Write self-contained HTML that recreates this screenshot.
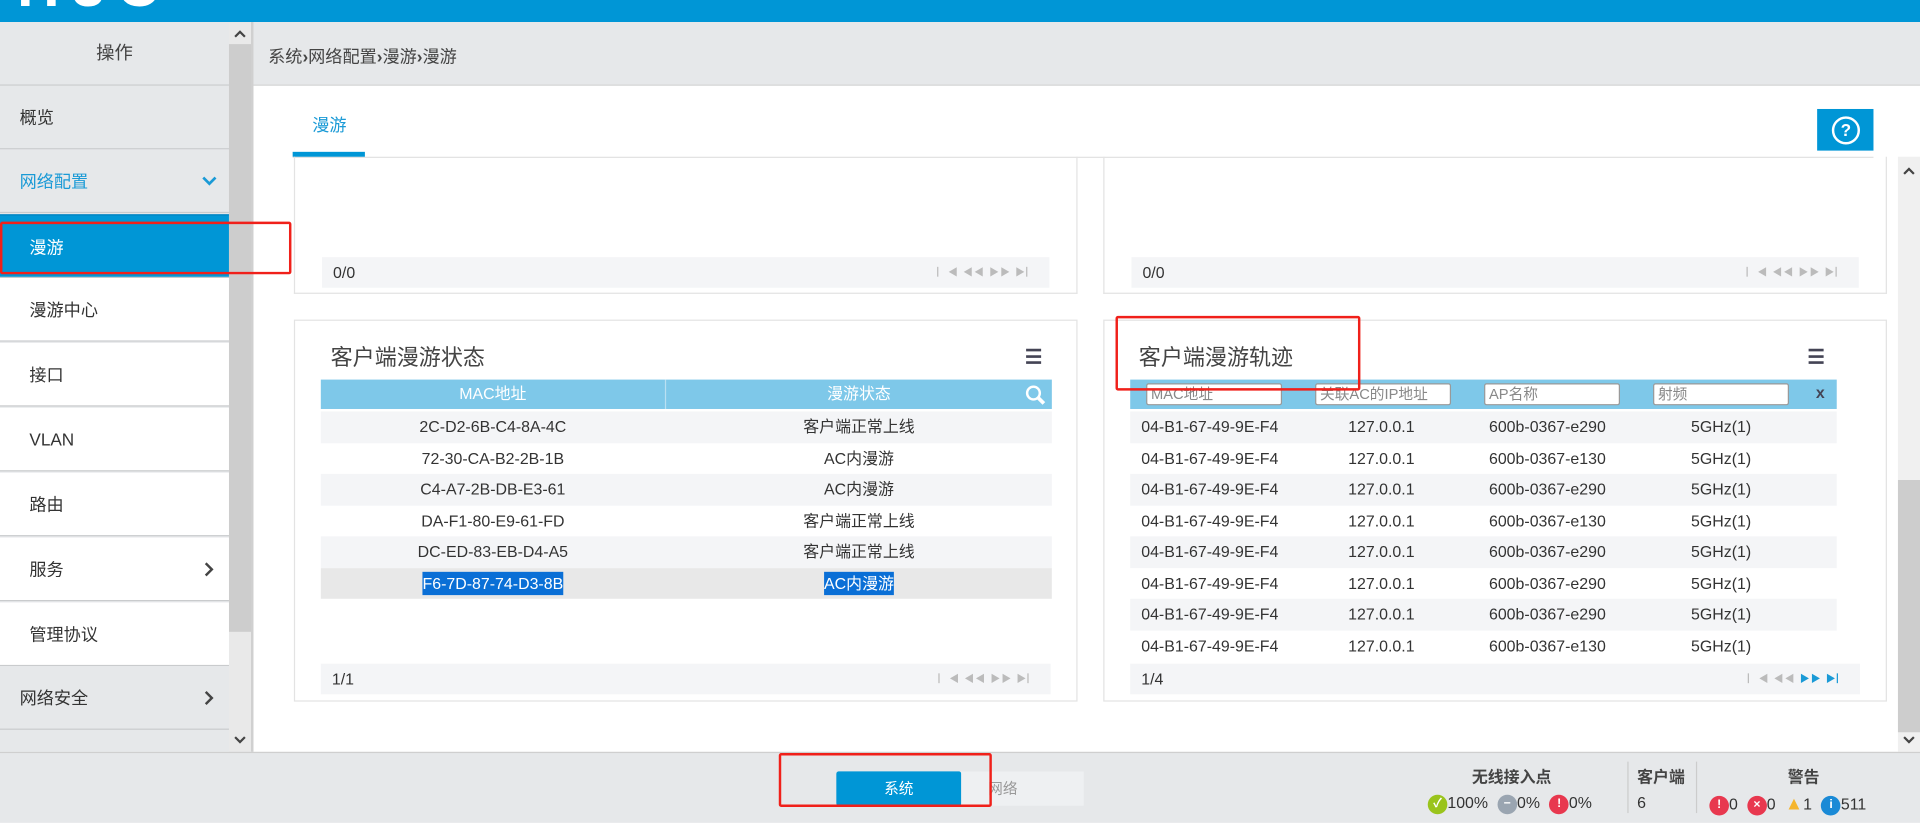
<!DOCTYPE html>
<html><head><meta charset="utf-8"><style>
html,body{margin:0;padding:0;width:1920px;height:821px;overflow:hidden;background:#fff}
#w{position:absolute;left:0;top:0;width:1568px;height:671px;transform:scale(1.22449);transform-origin:0 0;font-family:"Liberation Sans","Noto Sans CJK SC",sans-serif;color:#333;font-size:13px}
.a{position:absolute}
.nav{position:absolute;left:0;width:187px;height:52px;border-bottom:1px solid #c9cbcd;background:#e6e8ea;font-size:14px;line-height:52px;box-sizing:border-box}
.rows div{position:absolute;left:0;right:0;height:25.5px;line-height:25.5px}
.g{background:#f4f5f7}
.c{position:absolute;text-align:center}
.ft{position:absolute;left:22px;right:22px;height:25px;background:#f4f5f7;line-height:25px;padding-left:9px;font-size:13px}
.pg{position:absolute;right:10px;top:0;color:#bbb;font-size:8px;letter-spacing:1px}
.inp{position:absolute;top:3px;height:18px;background:#fff;border:1px solid #999;border-radius:2px;box-sizing:border-box;color:#888;font-size:12px;line-height:16px;padding-left:3px}
.red{position:absolute;border:2px solid #f0201a;border-radius:2px}
.ic{display:inline-block;width:16px;height:16px;border-radius:50%;color:#fff;font-size:10px;line-height:16px;text-align:center;font-weight:bold;vertical-align:middle;margin-left:4px}
</style></head><body><div id="w">
<div class="a" style="left:0;top:0;width:1568px;height:18px;background:#0096d6;overflow:hidden"><div class="a" style="left:14px;top:-38px;color:#fff;font-size:48px;font-weight:bold;letter-spacing:10px">H3C</div></div>
<!-- sidebar -->
<div class="a" style="left:0;top:18px;width:207px;height:596px;background:#e6e8ea"></div>
<div class="nav" style="top:18px;text-align:center;font-size:15px;color:#444">操作</div>
<div class="nav" style="top:70px;padding-left:16px">概览</div>
<div class="nav" style="top:122px;padding-left:16px;color:#1a9ad6">网络配置<svg class="a" style="left:165px;top:22px" width="12" height="8" viewBox="0 0 12 8"><path d="M1 1l5 5 5-5" stroke="#1a9ad6" stroke-width="2.2" fill="none"/></svg></div>
<div class="nav" style="top:175px;height:52px;background:#0096d6;color:#fff;padding-left:24px;border-top:1px solid #0080c0">漫游</div>
<div class="nav" style="top:227px;background:#fff;padding-left:24px">漫游中心</div>
<div class="nav" style="top:280px;background:#fff;padding-left:24px">接口</div>
<div class="nav" style="top:333px;background:#fff;padding-left:24px">VLAN</div>
<div class="nav" style="top:386px;background:#fff;padding-left:24px">路由</div>
<div class="nav" style="top:439px;background:#fff;padding-left:24px">服务<svg class="a" style="left:167px;top:20px" width="8" height="12" viewBox="0 0 8 12"><path d="M1 1l5 5-5 5" stroke="#444" stroke-width="2" fill="none"/></svg></div>
<div class="nav" style="top:492px;background:#fff;padding-left:24px">管理协议</div>
<div class="nav" style="top:544px;padding-left:16px">网络安全<svg class="a" style="left:167px;top:20px" width="8" height="12" viewBox="0 0 8 12"><path d="M1 1l5 5-5 5" stroke="#444" stroke-width="2" fill="none"/></svg></div>
<div class="a" style="left:187px;top:18px;width:18px;height:596px;background:#e9e9e9"></div>
<div class="a" style="left:187px;top:36px;width:18px;height:480px;background:#cdcdcd"></div>
<svg class="a" style="left:191px;top:24px" width="10" height="7" viewBox="0 0 10 7"><path d="M1 6l4-4 4 4" stroke="#444" stroke-width="1.8" fill="none"/></svg>
<svg class="a" style="left:191px;top:601px" width="10" height="7" viewBox="0 0 10 7"><path d="M1 1l4 4 4-4" stroke="#444" stroke-width="1.8" fill="none"/></svg>
<div class="a" style="left:205px;top:18px;width:2px;height:596px;background:#d0d0d0"></div>
<!-- breadcrumb -->
<div class="a" style="left:207px;top:18px;width:1361px;height:52px;background:#e6e8ea;border-bottom:1px solid #d6d6d6;box-sizing:border-box"></div>
<div class="a" style="left:219px;top:36px;font-size:14px;color:#444">系统<b>›</b>网络配置<b>›</b>漫游<b>›</b>漫游</div>
<div class="a" style="left:255px;top:92px;font-size:14px;color:#1a9ad6">漫游</div>
<div class="a" style="left:239px;top:128px;width:1291px;height:1px;background:#e2e2e2"></div>
<div class="a" style="left:239px;top:124px;width:59px;height:4px;background:#0096d6"></div>
<div class="a" style="left:1484px;top:89px;width:46px;height:34px;background:#0096d6"></div>
<div class="a" style="left:1496px;top:95px;width:19px;height:19px;border:2px solid #fff;border-radius:50%;color:#fff;text-align:center;font-weight:bold;font-size:14px;line-height:19px">?</div>
<div class="a" style="left:1550px;top:128px;width:18px;height:486px;background:#f0f0f0"></div>
<div class="a" style="left:1550px;top:392px;width:18px;height:206px;background:#cdcdcd"></div>
<svg class="a" style="left:1554px;top:136px" width="10" height="7" viewBox="0 0 10 7"><path d="M1 6l4-4 4 4" stroke="#444" stroke-width="1.8" fill="none"/></svg>
<svg class="a" style="left:1554px;top:601px" width="10" height="7" viewBox="0 0 10 7"><path d="M1 1l4 4 4-4" stroke="#444" stroke-width="1.8" fill="none"/></svg>
<!-- upper panels -->
<div class="a" style="left:240px;top:128px;width:640px;height:112px;border:1px solid #e3e3e3;border-top:none;box-sizing:border-box"><div class="ft" style="top:82px;left:22px">0/0<span class="pg">▏◀ ◀◀ ▶▶ ▶▏</span></div></div>
<div class="a" style="left:901px;top:128px;width:640px;height:112px;border:1px solid #e3e3e3;border-top:none;box-sizing:border-box"><div class="ft" style="top:82px">0/0<span class="pg">▏◀ ◀◀ ▶▶ ▶▏</span></div></div>
<!-- lower left -->
<div class="a" style="left:240px;top:261px;width:640px;height:312px;border:1px solid #e3e3e3;box-sizing:border-box">
<div class="a" style="left:29px;top:16px;font-size:18px;color:#444">客户端漫游状态</div>
<div class="a" style="left:596px;top:20px;font-size:16px;color:#445;font-weight:bold">&#x2630;</div>
<div class="a" style="left:21px;top:48px;width:597px;height:24px;background:#7ec8e9;color:#fff;line-height:24px">
<div class="c" style="left:0;width:281px">MAC地址</div><div class="a" style="left:281px;top:0;width:1px;height:24px;background:#b9e0f2"></div><div class="c" style="left:282px;width:315px">漫游状态</div>
<svg class="a" style="left:575px;top:4px" width="17" height="17" viewBox="0 0 17 17"><circle cx="7" cy="7" r="5.2" stroke="#fff" stroke-width="2" fill="none"/><path d="M11 11l4.5 4.5" stroke="#fff" stroke-width="3"/></svg></div>
<div class="a rows" style="left:21px;top:74px;width:597px">
<div class="g" style="top:0"><span class="c" style="left:0;width:281px">2C-D2-6B-C4-8A-4C</span><span class="c" style="left:282px;width:315px">客户端正常上线</span></div>
<div style="top:25.5px"><span class="c" style="left:0;width:281px">72-30-CA-B2-2B-1B</span><span class="c" style="left:282px;width:315px">AC内漫游</span></div>
<div class="g" style="top:51px"><span class="c" style="left:0;width:281px">C4-A7-2B-DB-E3-61</span><span class="c" style="left:282px;width:315px">AC内漫游</span></div>
<div style="top:76.5px"><span class="c" style="left:0;width:281px">DA-F1-80-E9-61-FD</span><span class="c" style="left:282px;width:315px">客户端正常上线</span></div>
<div class="g" style="top:102px"><span class="c" style="left:0;width:281px">DC-ED-83-EB-D4-A5</span><span class="c" style="left:282px;width:315px">客户端正常上线</span></div>
<div style="top:127.5px;background:#e8e8e8"><span class="c" style="left:0;width:281px"><span style="background:#0a6fd6;color:#fff;padding:2px 0">F6-7D-87-74-D3-8B</span></span><span class="c" style="left:282px;width:315px"><span style="background:#0a6fd6;color:#fff;padding:2px 0">AC内漫游</span></span></div>
</div>
<div class="ft" style="top:280px;left:21px;right:21px">1/1<span class="pg">▏◀ ◀◀ ▶▶ ▶▏</span></div>
</div>
<!-- lower right -->
<div class="a" style="left:901px;top:261px;width:640px;height:312px;border:1px solid #e3e3e3;box-sizing:border-box">
<div class="a" style="left:28px;top:16px;font-size:18px;color:#444">客户端漫游轨迹</div>
<div class="a" style="left:574px;top:20px;font-size:16px;color:#445;font-weight:bold">&#x2630;</div>
<div class="a" style="left:21px;top:48px;width:577px;height:24px;background:#7ec8e9">
<div class="inp" style="left:13px;width:111px">MAC地址</div><div class="inp" style="left:151px;width:111px">关联AC的IP地址</div><div class="inp" style="left:289px;width:111px">AP名称</div><div class="inp" style="left:427px;width:111px">射频</div>
<div class="a" style="left:560px;top:3px;color:#445;font-weight:bold;font-size:13px">x</div></div>
<div class="a rows" style="left:21px;top:74px;width:577px">
<div class="g" style="top:0"><span class="a" style="left:9px">04-B1-67-49-9E-F4</span><span class="a" style="left:178px">127.0.0.1</span><span class="a" style="left:293px">600b-0367-e290</span><span class="a" style="left:458px">5GHz(1)</span></div>
<div style="top:25.5px"><span class="a" style="left:9px">04-B1-67-49-9E-F4</span><span class="a" style="left:178px">127.0.0.1</span><span class="a" style="left:293px">600b-0367-e130</span><span class="a" style="left:458px">5GHz(1)</span></div>
<div class="g" style="top:51px"><span class="a" style="left:9px">04-B1-67-49-9E-F4</span><span class="a" style="left:178px">127.0.0.1</span><span class="a" style="left:293px">600b-0367-e290</span><span class="a" style="left:458px">5GHz(1)</span></div>
<div style="top:76.5px"><span class="a" style="left:9px">04-B1-67-49-9E-F4</span><span class="a" style="left:178px">127.0.0.1</span><span class="a" style="left:293px">600b-0367-e130</span><span class="a" style="left:458px">5GHz(1)</span></div>
<div class="g" style="top:102px"><span class="a" style="left:9px">04-B1-67-49-9E-F4</span><span class="a" style="left:178px">127.0.0.1</span><span class="a" style="left:293px">600b-0367-e290</span><span class="a" style="left:458px">5GHz(1)</span></div>
<div style="top:127.5px"><span class="a" style="left:9px">04-B1-67-49-9E-F4</span><span class="a" style="left:178px">127.0.0.1</span><span class="a" style="left:293px">600b-0367-e290</span><span class="a" style="left:458px">5GHz(1)</span></div>
<div class="g" style="top:153px"><span class="a" style="left:9px">04-B1-67-49-9E-F4</span><span class="a" style="left:178px">127.0.0.1</span><span class="a" style="left:293px">600b-0367-e290</span><span class="a" style="left:458px">5GHz(1)</span></div>
<div style="top:178.5px"><span class="a" style="left:9px">04-B1-67-49-9E-F4</span><span class="a" style="left:178px">127.0.0.1</span><span class="a" style="left:293px">600b-0367-e130</span><span class="a" style="left:458px">5GHz(1)</span></div>
</div>
<div class="ft" style="top:280px;left:21px;right:21px">1/4<span class="pg">▏◀ ◀◀ <span style="color:#1a9ad6">▶▶ ▶▏</span></span></div>
</div>
<!-- bottom bar -->
<div class="a" style="left:0;top:614px;width:1568px;height:57px;background:#e6e8ea;border-top:1px solid #cfcfcf"></div>
<div class="a" style="left:683px;top:630px;width:102px;height:28px;background:#0096d6;color:#fff;text-align:center;line-height:28px;font-size:12px;border-radius:2px">系统</div>
<div class="a" style="left:785px;top:630px;width:100px;height:28px;background:#eef0f2;color:#999;line-height:28px;padding-left:22px;box-sizing:border-box;font-size:12px">网络</div>
<div class="a" style="left:1202px;top:624px;font-weight:bold;font-size:13px;color:#444">无线接入点</div>
<div class="a" style="left:1329px;top:622px;width:1px;height:42px;background:#ccc"></div>
<div class="a" style="left:1337px;top:624px;font-weight:bold;font-size:13px;color:#444">客户端</div>
<div class="a" style="left:1385px;top:622px;width:1px;height:42px;background:#ccc"></div>
<div class="a" style="left:1460px;top:624px;font-weight:bold;font-size:13px;color:#444">警告</div>
<div class="a" style="left:1162px;top:648px;font-size:13px;white-space:nowrap"><span class="ic" style="background:#9ac41c">✓</span>100% <span class="ic" style="background:#9aa5b1">−</span>0% <span class="ic" style="background:#e8384f">!</span>0%</div>
<div class="a" style="left:1337px;top:648px;font-size:13px">6</div>
<div class="a" style="left:1392px;top:648px;font-size:13px;white-space:nowrap"><span class="ic" style="background:#e8384f">!</span>0 <span class="ic" style="background:#e8384f">×</span>0 <span style="color:#f5b52e;font-size:15px;margin-left:4px">▲</span>1 <span class="ic" style="background:#1a8ad6">i</span>511</div>
<!-- red boxes -->
<div class="red" style="left:0;top:181px;width:234px;height:39px"></div>
<div class="red" style="left:911px;top:258px;width:196px;height:57px"></div>
<div class="red" style="left:636px;top:615px;width:170px;height:40px"></div>
</div></body></html>
